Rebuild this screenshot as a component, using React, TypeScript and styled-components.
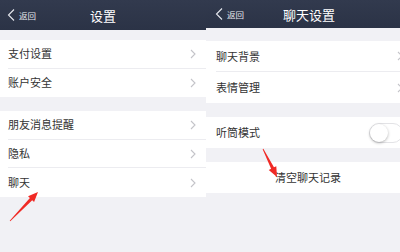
import styled, { createGlobalStyle } from 'styled-components';

const GlobalStyle = createGlobalStyle`
  html, body {
    margin: 0;
    padding: 0;
    background: #f1f1f5;
  }
  body {
    font-family: "Noto Sans CJK SC", "Noto Sans", sans-serif;
  }
`;

type Item = { label: string; chevron?: boolean; toggle?: boolean; center?: boolean };

const leftGroups: Item[][] = [
  [{ label: '支付设置', chevron: true }, { label: '账户安全', chevron: true }],
  [
    { label: '朋友消息提醒', chevron: true },
    { label: '隐私', chevron: true },
    { label: '聊天', chevron: true },
  ],
];

const rightGroups: Item[][] = [
  [{ label: '聊天背景', chevron: true }, { label: '表情管理', chevron: true }],
  [{ label: '听筒模式', toggle: true }],
  [{ label: '清空聊天记录', center: true }],
];

const arrowPoints = (x1: number, y1: number, x2: number, y2: number) => {
  const dx = x2 - x1;
  const dy = y2 - y1;
  const len = Math.hypot(dx, dy);
  const ux = dx / len;
  const uy = dy / len;
  const nx = -uy;
  const ny = ux;
  const head = 10;
  const nxk = x2 - ux * head;
  const nyk = y2 - uy * head;
  const p = (x: number, y: number, w: number) => [
    [x + nx * w, y + ny * w],
    [x - nx * w, y - ny * w],
  ];
  const [t1, t2] = p(x1, y1, 0.4);
  const [s1, s2] = p(nxk, nyk, 1.6);
  const [h1, h2] = p(nxk, nyk, 4.2);
  return [t1, s1, h1, [x2, y2], h2, s2, t2].map((q) => q.join(',')).join(' ');
};

const Chevron = ({ inset }: { inset: number }) => (
  <ChevronIcon $inset={inset} width="6" height="10" viewBox="0 0 6 10">
    <polyline points="1,1 5,5 1,9" fill="none" stroke="#c4c4c9" strokeWidth="1.1" />
  </ChevronIcon>
);

const BackIcon = () => (
  <svg width="8" height="12" viewBox="0 0 8 12">
    <polyline points="7,0.5 1.5,6 7,11.5" fill="none" stroke="#e6e8ee" strokeWidth="1.1" />
  </svg>
);

type ScreenProps = {
  width: number;
  navHeight: number;
  title: string;
  titleShift: number;
  rowHeight: number;
  groups: Item[][];
  gaps: number[];
  pad: number;
  inset: number;
  arrow: [number, number, number, number];
};

const PhoneScreen = ({ width, navHeight, title, titleShift, rowHeight, groups, gaps, pad, inset, arrow }: ScreenProps) => (
  <Screen $width={width}>
    <NavBar $height={navHeight}>
      <Back $pad={pad}>
        <BackIcon />
        <BackText>返回</BackText>
      </Back>
      <Title $shift={titleShift}>{title}</Title>
      <span />
    </NavBar>
    {groups.map((group, gi) => (
      <Group key={gi} $gap={gaps[gi]}>
        {group.map((item, i) => (
          <Row key={item.label} $height={rowHeight} $pad={pad} $last={i === group.length - 1} $center={item.center}>
            <Label>{item.label}</Label>
            {item.chevron && <Chevron inset={inset} />}
            {item.toggle && (
              <Toggle>
                <Knob />
              </Toggle>
            )}
          </Row>
        ))}
      </Group>
    ))}
    <Overlay width={width} height={252} viewBox={`0 0 ${width} 252`}>
      <polygon points={arrowPoints(...arrow)} fill="#f02a25" />
    </Overlay>
  </Screen>
);

const App = () => (
  <>
    <GlobalStyle />
    <Page>
      <PhoneScreen
        width={206}
        navHeight={30}
        title="设置"
        titleShift={0}
        rowHeight={28.6}
        groups={leftGroups}
        gaps={[10, 14]}
        pad={8}
        inset={10}
        arrow={[10, 221, 38, 192]}
      />
      <PhoneScreen
        width={194}
        navHeight={28}
        title="聊天设置"
        titleShift={12}
        rowHeight={31}
        groups={rightGroups}
        gaps={[13, 14, 14]}
        pad={10}
        inset={-3}
        arrow={[57, 149, 71, 177]}
      />
    </Page>
  </>
);

const Page = styled.div`
  display: flex;
  width: 400px;
  height: 252px;
  overflow: hidden;
  background: #f1f1f5;
`;

const Screen = styled.div<{ $width: number }>`
  position: relative;
  width: ${({ $width }) => $width}px;
  flex-shrink: 0;
  height: 252px;
  overflow: hidden;
  background: #f1f1f5;
`;

const NavBar = styled.div<{ $height: number }>`
  height: ${({ $height }) => $height}px;
  display: grid;
  grid-template-columns: 1fr auto 1fr;
  align-items: center;
  background: linear-gradient(#323a4e, #2b3346);
  color: #fff;
`;

const Back = styled.div<{ $pad: number }>`
  display: flex;
  align-items: center;
  gap: 4px;
  padding-left: ${({ $pad }) => $pad - 1}px;
`;

const BackText = styled.span`
  font-size: 8.5px;
  color: #e6e8ee;
  line-height: 1;
`;

const Title = styled.div<{ $shift: number }>`
  font-size: 13px;
  line-height: 1;
  color: #fff;
  margin-left: ${({ $shift }) => $shift}px;
`;

const Group = styled.div<{ $gap: number }>`
  margin-top: ${({ $gap }) => $gap}px;
  background: #fff;
`;

const Row = styled.div<{ $height: number; $pad: number; $last: boolean; $center?: boolean }>`
  height: ${({ $height }) => $height}px;
  margin-left: ${({ $pad }) => $pad}px;
  display: flex;
  align-items: center;
  justify-content: ${({ $center }) => ($center ? 'center' : 'space-between')};
  box-sizing: border-box;
  border-bottom: ${({ $last }) => ($last ? 'none' : '1px solid #ececf0')};
  font-size: 11px;
  color: #333333;
`;

const Label = styled.span`
  line-height: 1;
`;

const ChevronIcon = styled.svg<{ $inset: number }>`
  margin-right: ${({ $inset }) => $inset}px;
  flex-shrink: 0;
`;

const Toggle = styled.div`
  position: relative;
  width: 34px;
  height: 20px;
  margin-right: -3px;
  border-radius: 10px;
  border: 1px solid #e3e3e6;
  background: #fff;
  box-sizing: border-box;
  flex-shrink: 0;
`;

const Knob = styled.div`
  position: absolute;
  left: 0;
  top: 0;
  width: 18px;
  height: 18px;
  border-radius: 50%;
  background: #fff;
  box-shadow: 0 1px 3px rgba(0, 0, 0, 0.3);
`;

const Overlay = styled.svg`
  position: absolute;
  left: 0;
  top: 0;
  pointer-events: none;
`;

export default App;
